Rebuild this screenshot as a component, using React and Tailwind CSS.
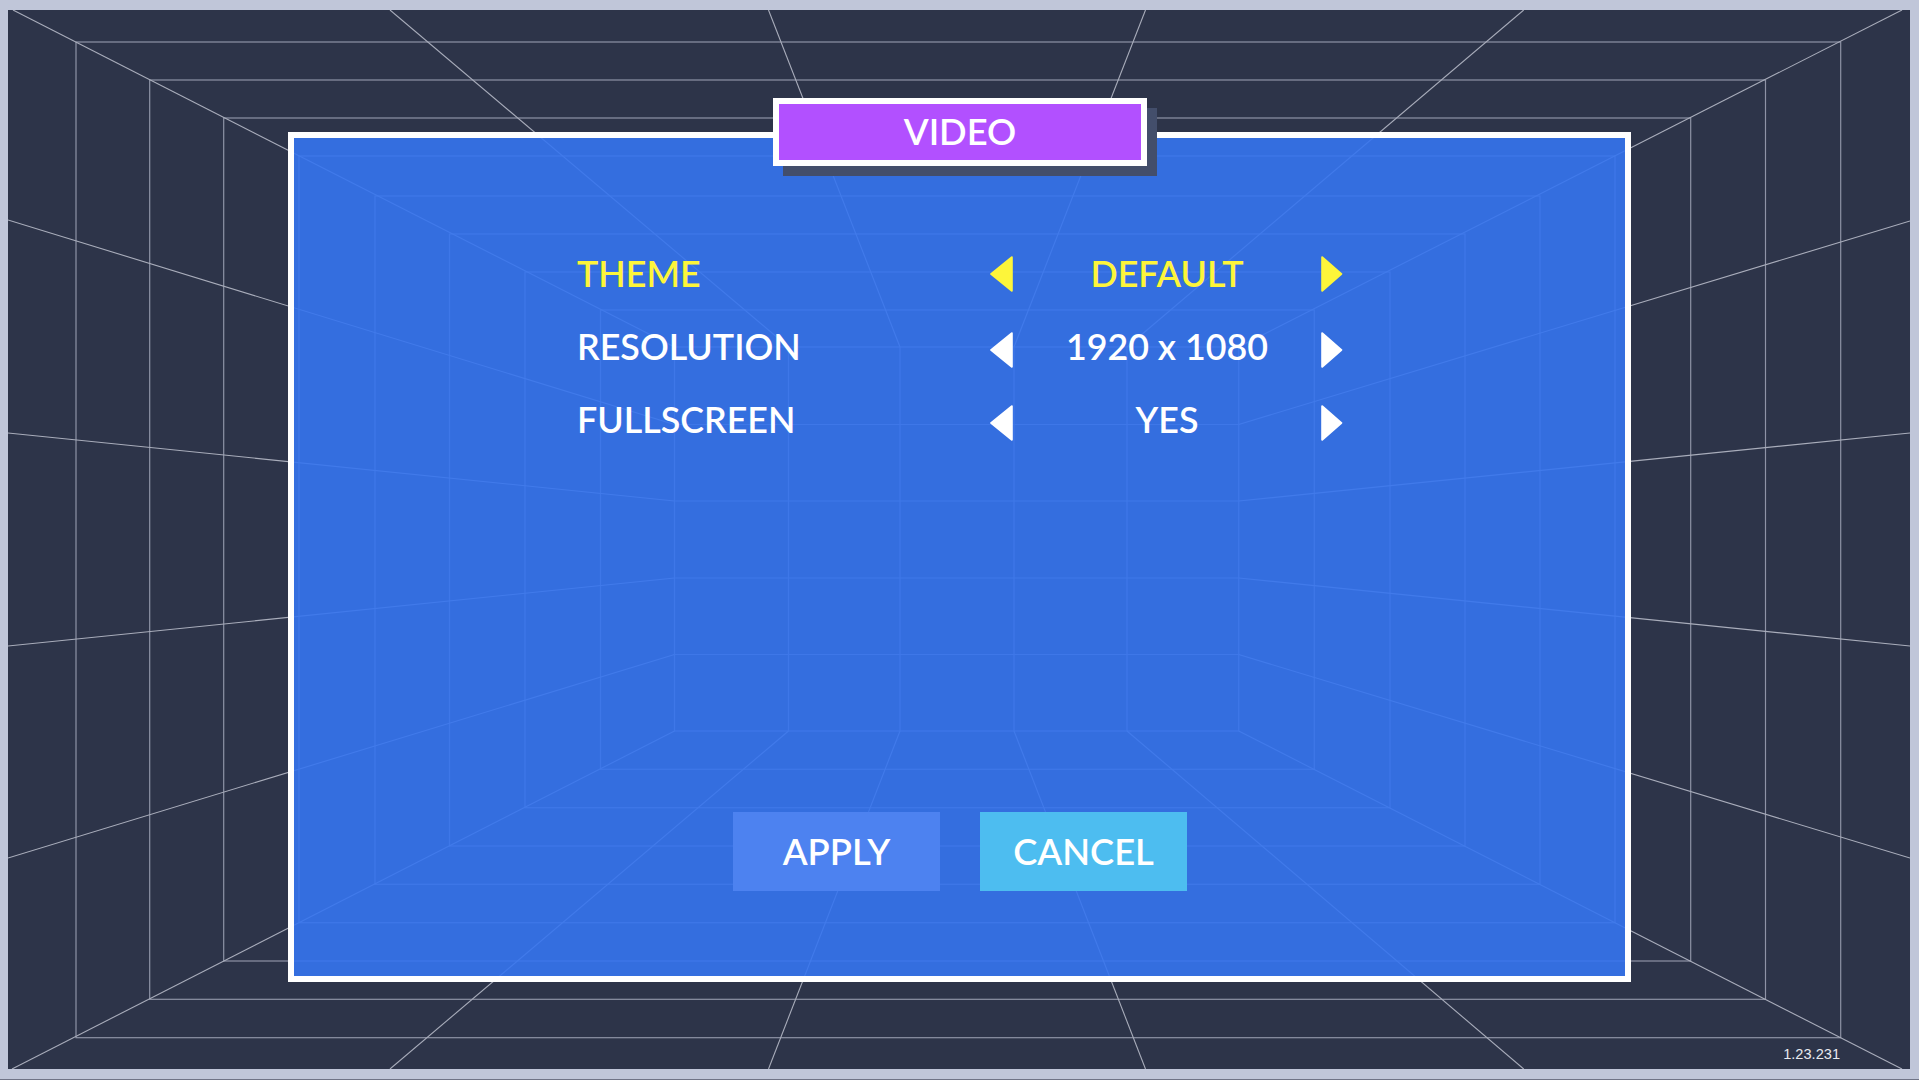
const X = [76, 149.7, 223.7, 299, 375, 449.5, 525, 600.5, 674.5];
const XR = [1840.7, 1765.5, 1690.7, 1615, 1540, 1465, 1390, 1314.3, 1238.7];
const YT = [42, 80, 118, 156, 196, 234, 272, 310, 347];
const YB = [1037.7, 999.3, 961, 922.7, 884.3, 846, 807.7, 769.3, 731];

const WALL_X = [674.5, 788.5, 900, 1014, 1127, 1238.7];
const WALL_Y = [347, 424.5, 501, 578, 654.5, 731];

const PERSPECTIVE = [
  [13, 10, 674.5, 347],
  [1902, 10, 1238.7, 347],
  [12, 1069, 674.5, 731],
  [1902, 1069, 1238.7, 731],
  [390, 10, 788.5, 347],
  [768.5, 10, 900, 347],
  [1145.5, 10, 1014, 347],
  [1523.7, 10, 1127, 347],
  [390, 1069, 788.5, 731],
  [768.5, 1069, 900, 731],
  [1145.5, 1069, 1014, 731],
  [1523.7, 1069, 1127, 731],
  [8, 220, 674.5, 424.5],
  [8, 433, 674.5, 501],
  [8, 646, 674.5, 578],
  [8, 858, 674.5, 654.5],
  [1910, 221, 1238.7, 424.5],
  [1910, 433, 1238.7, 501],
  [1910, 646, 1238.7, 578],
  [1910, 858, 1238.7, 654.5],
];

function Backdrop() {
  return (
    <svg
      className="absolute inset-0"
      width="1902"
      height="1059"
      viewBox="8 10 1902 1059"
      fill="none"
    >
      {X.map((x, i) => (
        <rect
          key={i}
          x={x}
          y={YT[i]}
          width={XR[i] - x}
          height={YB[i] - YT[i]}
          stroke="#8e93a6"
          strokeWidth="1.2"
        />
      ))}
      {WALL_X.slice(1, 5).map((x) => (
        <line key={x} x1={x} y1="347" x2={x} y2="731" stroke="#8e93a6" strokeWidth="1.2" />
      ))}
      {WALL_Y.slice(1, 5).map((y) => (
        <line key={y} x1="674.5" y1={y} x2="1238.7" y2={y} stroke="#8e93a6" strokeWidth="1.2" />
      ))}
      {PERSPECTIVE.map(([a, b, c, d], i) => (
        <line key={i} x1={a} y1={b} x2={c} y2={d} stroke="#a9adbb" strokeWidth="1.1" />
      ))}
    </svg>
  );
}

function ArrowLeft({ color, className }) {
  return (
    <svg width="23" height="36" viewBox="0 0 23 36" className={className}>
      <polygon
        points="21.8,1.2 21.8,34.8 1.2,18"
        fill={color}
        stroke={color}
        strokeWidth="2"
        strokeLinejoin="round"
      />
    </svg>
  );
}

function ArrowRight({ color, className }) {
  return (
    <svg width="22" height="36" viewBox="0 0 22 36" className={className}>
      <polygon
        points="1.2,1.2 1.2,34.8 20.3,18"
        fill={color}
        stroke={color}
        strokeWidth="2"
        strokeLinejoin="round"
      />
    </svg>
  );
}

function Row({ label, value, active }) {
  const text = active ? "text-[#fdf53a]" : "text-white";
  const color = active ? "#fdf53a" : "#ffffff";
  const shift = active ? "" : "mt-[6px]";
  return (
    <div className={`flex h-[73px] items-center ${text}`}>
      <span className="flex-1">{label}</span>
      <ArrowLeft color={color} className={shift} />
      <span className="w-[308px] text-center">{value}</span>
      <ArrowRight color={color} className={shift} />
    </div>
  );
}

export default function App() {
  return (
    <div className="h-[1080px] w-full bg-[#6f7386] font-['Lato',sans-serif]">
      <div className="flex h-[1079px] flex-col bg-[#c0c6d9] pb-[10px] pl-2 pr-[9px] pt-[10px]">
        <div className="relative flex-1 overflow-hidden bg-[#2d3449] pb-[87px] pl-[280px] pr-[279px] pt-[122px]">
          <Backdrop />
          <div className="relative flex h-full flex-col border-[6px] border-white bg-[#3574ef]/90 pb-[85px]">
            <div className="absolute left-[479px] top-[-40px] flex h-[68px] w-[374px] items-center justify-center border-[6px] border-white bg-[#b250ff] pb-[2px] text-[36.3px] font-semibold text-white shadow-[10px_10px_0_0_#434e6b]">
              VIDEO
            </div>
            <div className="ml-[283px] mt-[99px] w-[766px] text-[35.8px] font-semibold">
              <Row label="THEME" value="DEFAULT" active />
              <Row label="RESOLUTION" value="1920 x 1080" />
              <Row label="FULLSCREEN" value="YES" />
            </div>
            <div className="ml-[1px] mt-auto flex justify-center gap-10 text-[36.3px] font-semibold text-white">
              <button className="h-[79px] w-[207px] bg-[#4d82f0]">APPLY</button>
              <button className="h-[79px] w-[207px] bg-[#4dbdf0]">CANCEL</button>
            </div>
          </div>
          <span className="absolute right-[70px] top-[1036px] font-['Liberation_Sans',sans-serif] text-[14.6px] leading-4 text-[#e8eaf0]">
            1.23.231
          </span>
        </div>
      </div>
    </div>
  );
}
